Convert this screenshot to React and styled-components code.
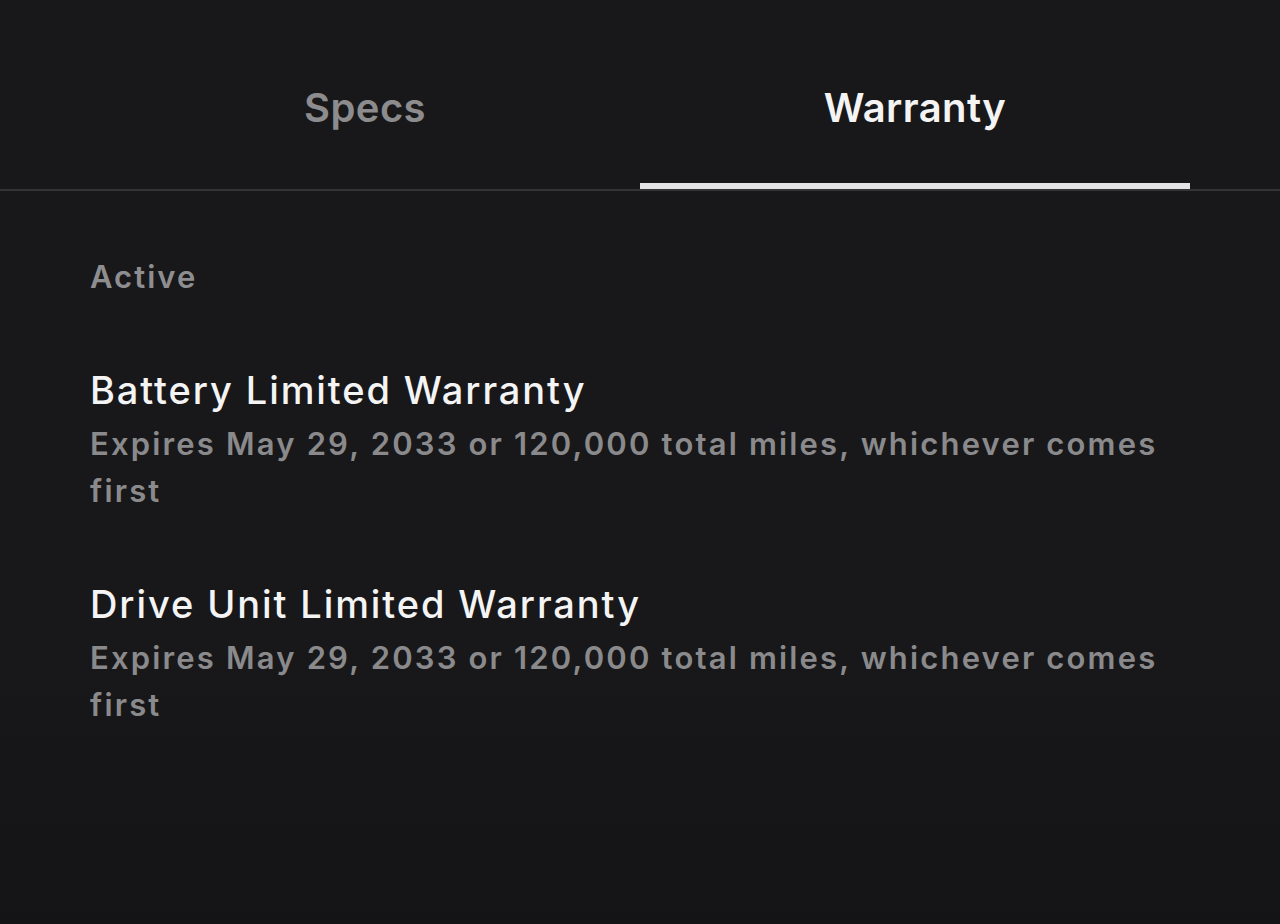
import React, { useState } from 'react';
import styled, { createGlobalStyle } from 'styled-components';

const GlobalStyle = createGlobalStyle`
  html, body {
    margin: 0;
    padding: 0;
    background: #18181a;
  }
  * {
    box-sizing: border-box;
  }
`;

const Screen = styled.div`
  min-height: 924px;
  background: linear-gradient(180deg, #18181a 0%, #18181a 70%, #141416 100%);
  font-family: Inter, "Noto Sans", "Liberation Sans", sans-serif;
  -webkit-font-smoothing: antialiased;
`;

const TabBar = styled.div`
  display: flex;
  padding: 0 90px;
  border-bottom: 2px solid #343436;
`;

const Tab = styled.button`
  flex: 1;
  display: flex;
  align-items: flex-start;
  justify-content: center;
  height: 189px;
  padding: 84px 0 0;
  border: none;
  border-bottom: 6px solid ${props => (props.active ? '#e4e4e6' : 'transparent')};
  background: none;
  color: ${props => (props.active ? '#f4f4f5' : '#8c8c8e')};
  font-family: inherit;
  font-size: 40px;
  font-weight: 600;
  line-height: 48px;
  letter-spacing: 0.01em;
  cursor: pointer;
`;

const Content = styled.div`
  padding: 66px 90px 0;
  max-width: 1280px;
`;

const SectionLabel = styled.div`
  color: #8e8e90;
  font-size: 31px;
  font-weight: 600;
  line-height: 40px;
  letter-spacing: 0.065em;
  margin-bottom: 70px;
`;

const WarrantyList = styled.div`
  display: flex;
  flex-direction: column;
  gap: 67px;
`;

const Item = styled.div`
  display: flex;
  flex-direction: column;
  gap: 7px;
`;

const ItemTitle = styled.div`
  color: #f4f4f5;
  font-size: 38px;
  font-weight: 500;
  line-height: 46px;
  letter-spacing: 0.05em;
`;

const ItemDetail = styled.div`
  color: #8a8a8c;
  font-size: 31px;
  font-weight: 600;
  line-height: 47px;
  letter-spacing: 0.07em;
`;

const warranties = [
  {
    title: 'Battery Limited Warranty',
    detail: 'Expires May 29, 2033 or 120,000 total miles, whichever comes first',
  },
  {
    title: 'Drive Unit Limited Warranty',
    detail: 'Expires May 29, 2033 or 120,000 total miles, whichever comes first',
  },
];

export default function App() {
  const [tab, setTab] = useState('warranty');

  return (
    <Screen>
      <GlobalStyle />
      <TabBar>
        <Tab active={tab === 'specs'} onClick={() => setTab('specs')}>
          Specs
        </Tab>
        <Tab active={tab === 'warranty'} onClick={() => setTab('warranty')}>
          Warranty
        </Tab>
      </TabBar>
      <Content>
        <SectionLabel>Active</SectionLabel>
        <WarrantyList>
          {warranties.map(w => (
            <Item key={w.title}>
              <ItemTitle>{w.title}</ItemTitle>
              <ItemDetail>{w.detail}</ItemDetail>
            </Item>
          ))}
        </WarrantyList>
      </Content>
    </Screen>
  );
}
